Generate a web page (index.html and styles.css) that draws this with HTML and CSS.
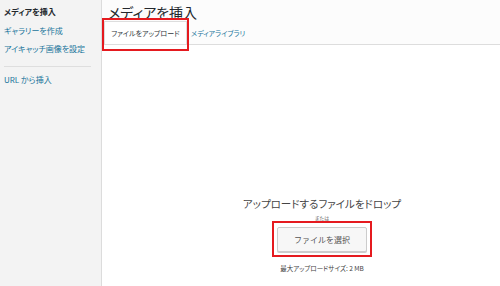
FILE: index.html
```html
<!DOCTYPE html>
<html>
<head>
  <meta charset="UTF-8">
  <title>メディアを挿入</title>
  <link rel="stylesheet" href="styles.css">
</head>
<body>
  <div class="sidebar">
    <p class="side-title">メディアを挿入</p>
    <a class="side-link" href="#">ギャラリーを作成</a>
    <a class="side-link" href="#">アイキャッチ画像を設定</a>
    <hr class="side-sep">
    <a class="side-link" href="#">URL から挿入</a>
  </div>

  <div class="main">
    <div class="header">
      <h1>メディアを挿入</h1>
      <div class="tabs">
        <span class="tab active marked">ファイルをアップロード</span>
        <a class="tab" href="#">メディアライブラリ</a>
      </div>
    </div>

    <div class="uploader">
      <p class="drop-text">アップロードするファイルをドロップ</p>
      <p class="or-text">または</p>
      <button class="select-button marked">ファイルを選択</button>
      <p class="max-size">最大アップロードサイズ: 2 MB</p>
    </div>
  </div>
</body>
</html>
```

FILE: styles.css
```css
body {
  margin: 0;
  width: 500px;
  height: 286px;
  display: flex;
  font-family: "Noto Sans CJK JP", "Noto Sans", sans-serif;
  font-feature-settings: "palt";
  background-color: #fff;
  overflow: hidden;
}
.sidebar {
  width: 101px;
  flex-shrink: 0;
  background-color: #f3f3f3;
  border-right: 1px solid #dcdcdc;
  padding-top: 6px;
}
.side-title {
  margin: 0 0 7px 4px;
  font-size: 8px;
  font-weight: bold;
  color: #23282d;
  line-height: 12px;
}
.side-link {
  display: block;
  margin: 0 0 6px 4px;
  font-size: 8px;
  line-height: 12px;
  color: #21759b;
  text-decoration: none;
}
.side-sep {
  margin: 11px 10px 7px 4px;
  border: none;
  border-top: 1px solid #dedede;
}
.main {
  flex: 1;
  display: flex;
  flex-direction: column;
}
.header {
  height: 44px;
  background-color: #fcfcfc;
  border-bottom: 1px solid #dddddd;
}
.header h1 {
  margin: 0;
  padding: 2px 0 0 6px;
  height: 20px;
  font-size: 14px;
  font-weight: normal;
  line-height: 20px;
  color: #23282d;
}
.tabs {
  display: flex;
  align-items: flex-end;
  height: 22px;
  padding-left: 2px;
}
.tab {
  font-size: 7px;
  line-height: 22px;
  color: #21759b;
  text-decoration: none;
  padding: 0 4px;
}
.tab.active {
  width: 83px;
  padding: 0;
  box-sizing: border-box;
  text-align: center;
  background-color: #fff;
  border: 1px solid #dddddd;
  border-bottom: none;
  color: #32373c;
  position: relative;
}
.tab.active.marked::after {
  content: "";
  position: absolute;
  left: -3px;
  top: -4px;
  right: -3px;
  bottom: -7px;
  border: 2px solid #e51a1f;
}
.uploader {
  flex: 1;
  display: flex;
  flex-direction: column;
  align-items: center;
  padding-left: 42px;
  padding-top: 150px;
}
.drop-text {
  margin: 0;
  font-size: 10.5px;
  line-height: 18px;
  color: #444;
}
.or-text {
  margin: 0;
  font-size: 5px;
  line-height: 10px;
  color: #666;
}
.select-button {
  margin-top: 4px;
  width: 90px;
  height: 25px;
  font-family: inherit;
  font-size: 8px;
  color: #555;
  background-color: #f7f7f7;
  border: 1px solid #cccccc;
  border-radius: 2px;
  box-shadow: 0 1px 0 #ccc;
  position: relative;
}
.select-button.marked::after {
  content: "";
  position: absolute;
  left: -6px;
  top: -7px;
  right: -6px;
  bottom: -6px;
  border: 2px solid #e51a1f;
}
.max-size {
  margin: 11px 0 0;
  font-size: 6.5px;
  line-height: 10px;
  color: #444;
}
```
